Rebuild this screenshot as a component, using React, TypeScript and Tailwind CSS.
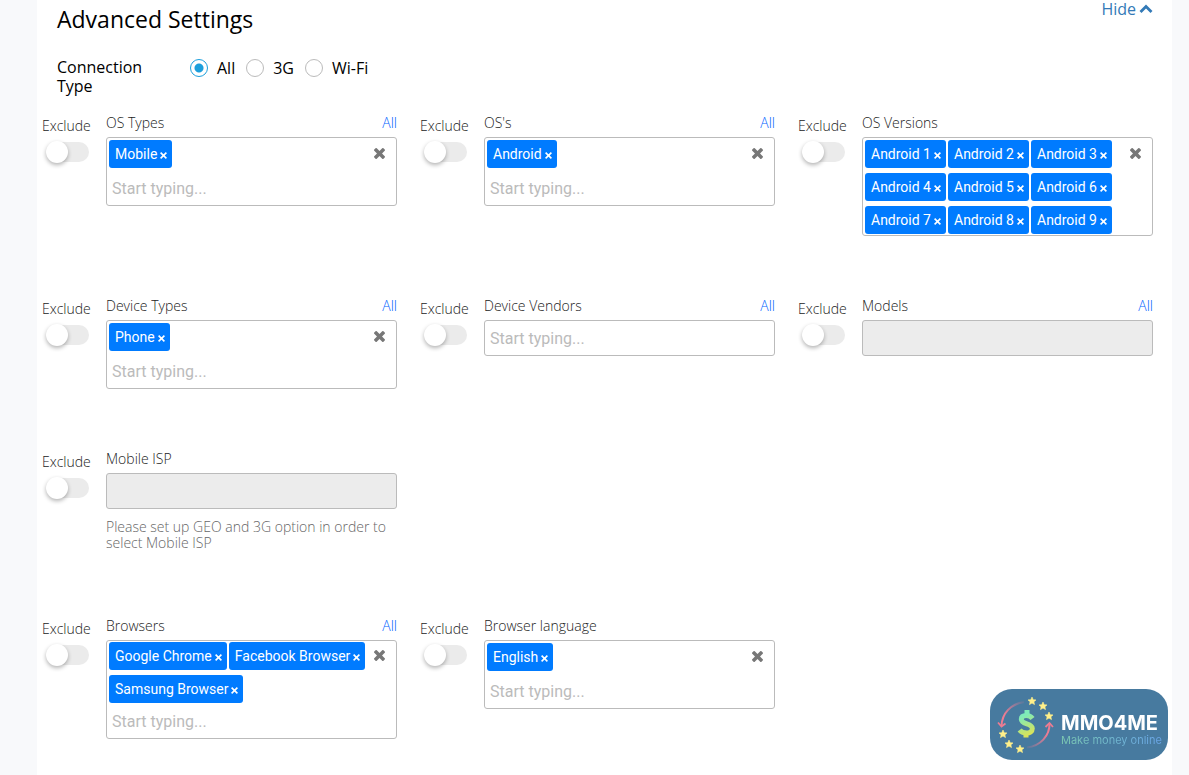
import { useId } from "react";
import clsx from "clsx";

type Field = {
  label: string;
  tags?: string[];
  all?: boolean;
  search?: boolean;
  disabled?: boolean;
  dense?: boolean;
  hint?: string;
};

const rows: Field[][] = [
  [
    { label: "OS Types", tags: ["Mobile"], all: true, search: true },
    { label: "OS's", tags: ["Android"], all: true, search: true },
    {
      label: "OS Versions",
      tags: [1, 2, 3, 4, 5, 6, 7, 8, 9].map((n) => `Android ${n}`),
    },
  ],
  [
    { label: "Device Types", tags: ["Phone"], all: true, search: true },
    { label: "Device Vendors", all: true, search: true },
    { label: "Models", all: true, disabled: true },
  ],
  [
    {
      label: "Mobile ISP",
      disabled: true,
      hint: "Please set up GEO and 3G option in order to select Mobile ISP",
    },
  ],
  [
    {
      label: "Browsers",
      tags: ["Google Chrome", "Facebook Browser", "Samsung Browser"],
      all: true,
      search: true,
      dense: true,
    },
    { label: "Browser language", tags: ["English"], search: true },
  ],
];

function CrossIcon({ className }: { className: string }) {
  return (
    <svg viewBox="110 366 1188 1188" className={className} aria-hidden="true">
      <path
        fill="currentColor"
        d="M1298 1322q0 40-28 68l-136 136q-28 28-68 28t-68-28l-294-294-294 294q-28 28-68 28t-68-28l-136-136q-28-28-28-68t28-68l294-294-294-294q-28-28-28-68t28-68l136-136q28-28 68-28t68 28l294 294 294-294q28-28 68-28t68 28l136 136q28 28 28 68t-28 68l-294 294 294 294q28 28 28 68z"
      />
    </svg>
  );
}

function ExcludeToggle({ field }: { field: string }) {
  return (
    <label className="w-16 shrink-0 pt-[3px] text-sm leading-5 font-light text-[#222]">
      Exclude
      <span className="mt-1 ml-1 flex h-6 w-[43px] items-center">
        <input
          type="checkbox"
          aria-label={`Exclude ${field}`}
          className="peer sr-only"
        />
        <span className="flex h-5 w-full items-center rounded-full bg-[#ebebeb] peer-checked:justify-end peer-checked:bg-[#007bff]">
          <span className="size-[22px] rounded-full bg-white shadow-[0_2px_4px_rgba(0,0,0,0.3)]" />
        </span>
      </span>
    </label>
  );
}

function TagField({ field }: { field: Field }) {
  const id = useId();
  const { label, tags = [], all, search, disabled, dense, hint } = field;

  return (
    <div className="flex">
      <ExcludeToggle field={label} />
      <div className="min-w-0 flex-1">
        <div className="flex h-6 justify-between text-sm leading-5 font-light">
          <label htmlFor={id} className="text-[#222]">
            {label}
          </label>
          {all && (
            <a href="#" className="text-[#0062ff]">
              All
            </a>
          )}
        </div>

        {disabled ? (
          <input
            id={id}
            disabled
            className="block h-9 w-full rounded-[3px] border border-[#bbb] bg-[#ececec]"
          />
        ) : (
          <div className="rounded-[3px] border border-[#bbb] bg-white font-[Roboto,sans-serif]">
            {tags.length > 0 && (
              <div
                className={clsx(
                  "flex items-start px-[2px]",
                  dense ? "pt-px" : "pt-[2px]",
                  search && !dense ? "pb-[3px]" : "pb-px",
                )}
              >
                <ul className="flex min-w-0 flex-1 flex-wrap gap-x-[2px] gap-y-[5px]">
                  {tags.map((tag) => (
                    <li
                      key={tag}
                      className="flex h-7 items-center gap-[3px] rounded-[3px] bg-[#007bff] pr-[5px] pl-[6px] text-sm text-white"
                    >
                      {tag}
                      <button
                        type="button"
                        aria-label={`Remove ${tag}`}
                        className="pt-[3px]"
                      >
                        <svg viewBox="0 0 7 7" className="size-[7px]" aria-hidden="true">
                          <path d="M.6.6l5.800 5.800M6.400.6L.6 6.400" stroke="currentColor" strokeWidth="1.600" />
                        </svg>
                      </button>
                    </li>
                  ))}
                </ul>
                <button
                  type="button"
                  aria-label={`Clear ${label}`}
                  className="mt-2 mr-[9px] ml-[2px] text-[#777]"
                >
                  <CrossIcon className="size-[11px]" />
                </button>
              </div>
            )}
            {search ? (
              <input
                id={id}
                placeholder="Start typing..."
                className="block h-[34px] w-full bg-transparent px-[5px] text-base outline-none placeholder:text-[#bbb]"
              />
            ) : (
              <input id={id} className="sr-only" />
            )}
          </div>
        )}

        {hint && (
          <p className="mt-[10px] mb-[5px] text-sm leading-4 font-light text-[#666]">
            {hint}
          </p>
        )}
      </div>
    </div>
  );
}

function Radio({ label, checked }: { label: string; checked?: boolean }) {
  return (
    <label className="flex items-center gap-[9px]">
      <input
        type="radio"
        name="connection"
        defaultChecked={checked}
        className="size-[18px] appearance-none rounded-full border border-[#bbb] bg-white checked:border-[#1c9fdc] checked:bg-[radial-gradient(circle,#1c9fdc_4px,white_5px)]"
      />
      {label}
    </label>
  );
}

const stars = [
  [42, 12],
  [53, 17],
  [59, 27],
  [13, 45],
  [19, 55],
  [30, 60],
];

function Badge() {
  return (
    <a
      href="#"
      className="fixed right-[21px] bottom-[15px] flex h-[71px] w-[178px] items-center rounded-[22px] bg-[#477a9f] font-[Inter,sans-serif]"
    >
      <svg viewBox="0 0 71 71" className="size-[71px] shrink-0" aria-hidden="true">
        <defs>
          <linearGradient id="dollar" gradientUnits="userSpaceOnUse" x1="30" y1="22" x2="42" y2="48">
            <stop offset="0.2" stopColor="#7eebb9" />
            <stop offset="1" stopColor="#e8e24a" />
          </linearGradient>
          <linearGradient id="arcLeft" x1="0" y1="1" x2="1" y2="0">
            <stop offset="0.3" stopColor="#ec7c92" />
            <stop offset="1" stopColor="#ec7c92" stopOpacity="0.1" />
          </linearGradient>
          <linearGradient id="arcRight" x1="1" y1="0" x2="0" y2="1">
            <stop offset="0.3" stopColor="#ec7c92" />
            <stop offset="1" stopColor="#ec7c92" stopOpacity="0.1" />
          </linearGradient>
        </defs>
        <path d="M34 13C21 15 12 24 11.500 37" fill="none" stroke="url(#arcLeft)" strokeWidth="2" />
        <path d="M8 33.500l3.500 4 4-3" fill="none" stroke="#ec7c92" strokeWidth="1.800" />
        <path d="M37 58.500C50 57 60 47 59.500 34" fill="none" stroke="url(#arcRight)" strokeWidth="2" />
        <path d="M55.500 38l4-4 3.500 4" fill="none" stroke="#ec7c92" strokeWidth="1.800" />
        {stars.map(([x, y]) => (
          <path
            key={`${x}-${y}`}
            transform={`translate(${x} ${y})`}
            fill="#fff08a"
            stroke="#fff08a"
            strokeWidth="0.600"
            strokeLinejoin="round"
            d="M0-4L1.200-1.300 4-1.100 1.900.8 2.500 3.600 0 2.100-2.500 3.600-1.900.8-4-1.100-1.200-1.300z"
          />
        ))}
        <path
          d="M42.500 29.500C41 27.500 39 26.500 36.500 26.500c-3.500 0-5.200 1.600-5.200 3.800 0 5.500 11 3.700 11 9.200 0 3-2.500 4.500-5.700 4.500-3 0-5.500-1-7-3"
          fill="none"
          stroke="url(#dollar)"
          strokeWidth="5"
        />
        <path d="M34.500 21h5v6h-5zM33.500 43h5v5.500h-5z" fill="url(#dollar)" />
      </svg>
      <span className="flex flex-col pt-[10px]">
        <span className="text-xl leading-5 font-bold text-white">MMO4ME</span>
        <span className="bg-linear-to-r from-[#7cc8b0] to-[#6aa5e8] bg-clip-text text-[11px] leading-[14px] text-transparent">
          Make money online
        </span>
      </span>
    </a>
  );
}

export default function App() {
  return (
    <div className="min-h-screen bg-[#f8f9fb] pr-[17px] pl-[37px] font-['Open_Sans',sans-serif] text-black">
      <main className="min-h-screen bg-white pr-[19px] pb-9 pl-[5px]">
        <header className="flex items-start justify-between pl-[15px]">
          <h1 className="pt-[3px] pb-px text-[23px] leading-8">
            Advanced Settings
          </h1>
          <a href="#" className="flex items-center gap-[3px] text-base leading-[18px] text-[#337ab7]">
            Hide
            <svg viewBox="0 0 14 10" className="h-[10px] w-[14px]" aria-hidden="true">
              <path d="M1.500 8L7 2.500 12.500 8" fill="none" stroke="currentColor" strokeWidth="2.800" />
            </svg>
          </a>
        </header>

        <fieldset className="mt-[22px] flex pl-[15px] text-base leading-[19px]">
          <legend className="float-left w-[133px] pr-8">Connection Type</legend>
          <div className="flex h-5 items-center gap-[11px]">
            <Radio label="All" checked />
            <Radio label="3G" />
            <Radio label="Wi-Fi" />
          </div>
        </fieldset>

        <div className="mt-[17px] flex flex-col gap-[60px]">
          {rows.map((row) => (
            <div key={row[0].label} className="grid grid-cols-3 gap-x-[23px]">
              {row.map((field) => (
                <TagField key={field.label} field={field} />
              ))}
            </div>
          ))}
        </div>
      </main>
      <Badge />
    </div>
  );
}
